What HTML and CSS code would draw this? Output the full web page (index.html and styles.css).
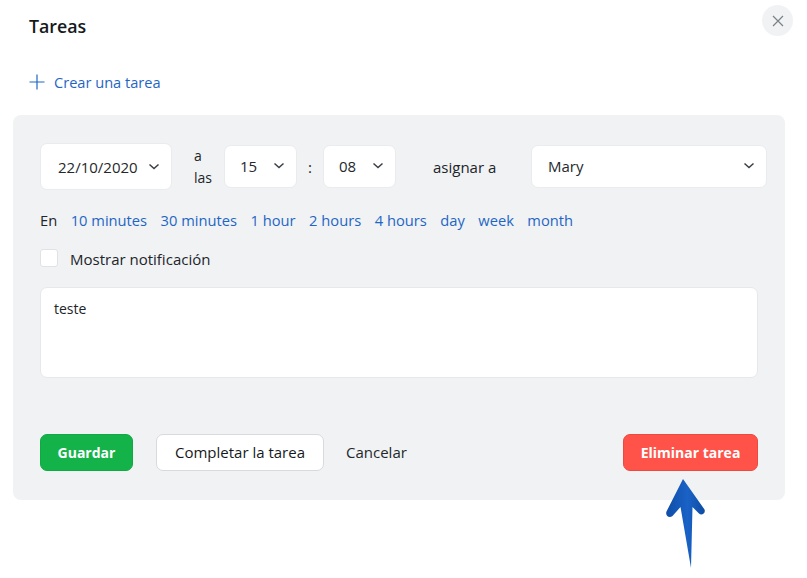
FILE: index.html
```html
<!DOCTYPE html>
<html lang="es">
<head>
<meta charset="utf-8">
<title>Tareas</title>
<link rel="stylesheet" href="styles.css">
</head>
<body>
<div class="dialog">
  <header class="head">
    <h1 class="title">Tareas</h1>
    <button class="close" aria-label="Cerrar">
      <svg width="12" height="12" viewBox="0 0 12 12"><path d="M1 1l10 10M11 1L1 11" stroke="#7b8085" stroke-width="1.2" fill="none"/></svg>
    </button>
  </header>
  <a class="create">
    <svg width="16" height="16" viewBox="0 0 16 16"><path d="M8 .5v15M.5 8h15" stroke="#1f66c4" stroke-width="1.2" fill="none"/></svg>
    <span>Crear una tarea</span>
  </a>
  <section class="panel">
    <div class="row-top">
      <div class="select date"><span>22/10/2020</span><svg class="chev" width="12" height="8" viewBox="0 0 12 8"><path d="M1.500 1.500L6 5.500l4.500-4" /></svg></div>
      <div class="at">a<br>las</div>
      <div class="select time"><span>15</span><svg class="chev" width="12" height="8" viewBox="0 0 12 8"><path d="M1.500 1.500L6 5.500l4.500-4" /></svg></div>
      <span class="colon">:</span>
      <div class="select time"><span>08</span><svg class="chev" width="12" height="8" viewBox="0 0 12 8"><path d="M1.500 1.500L6 5.500l4.500-4" /></svg></div>
      <span class="assign">asignar a</span>
      <div class="select user"><span>Mary</span><svg class="chev" width="12" height="8" viewBox="0 0 12 8"><path d="M1.500 1.500L6 5.500l4.500-4" /></svg></div>
    </div>
    <div class="quick">
      <span class="en">En</span>
      <a>10 minutes</a><a>30 minutes</a><a>1 hour</a><a>2 hours</a><a>4 hours</a><a>day</a><a>week</a><a>month</a>
    </div>
    <label class="notify"><span class="check"></span><span>Mostrar notificación</span></label>
    <div class="note">teste</div>
    <div class="actions">
      <button class="btn save">Guardar</button>
      <button class="btn complete">Completar la tarea</button>
      <button class="cancel">Cancelar</button>
      <button class="btn delete">Eliminar tarea</button>
    </div>
  </section>
  <svg class="arrow" width="42" height="91" viewBox="0 0 42 91">
    <defs>
      <linearGradient id="arrowFill" x1="0" x2="1" y1="0" y2="0">
        <stop offset="0" stop-color="#0f4da8"/>
        <stop offset="0.55" stop-color="#1a62c6"/>
        <stop offset="1" stop-color="#0e4ba3"/>
      </linearGradient>
    </defs>
    <path d="M18 1L39.500 31.500C41 35 36.500 38 34 35.500L27.500 29L26 90L15.500 29L7.500 38C4 40.500 0 37.500 1.500 33.500Z" fill="url(#arrowFill)"/>
  </svg>
</div>
</body>
</html>
```
FILE: styles.css
```css
* { box-sizing: border-box; }
html, body { margin: 0; padding: 0; background: #fff; }
body {
  font-family: "Open Sans", "Noto Sans", "Liberation Sans", sans-serif;
  font-size: 15px;
  color: #212529;
  width: 807px;
  height: 578px;
  overflow: hidden;
}
.dialog { position: relative; padding: 5px 22px 0 13px; }
.head { display: flex; justify-content: space-between; align-items: flex-start; padding-left: 16px; }
.title { margin: 9px 0 0; font-size: 17.800px; line-height: 24px; font-weight: 600; color: #16191c; }
.close {
  width: 31px; height: 31px; margin-right: -8px; border: 0; border-radius: 50%;
  background: #f1f2f4; display: flex; align-items: center; justify-content: center; padding: 0;
}
.create { display: flex; align-items: center; gap: 9px; margin: 32px 0 0 16px; height: 24px; color: #1f66c4; font-size: 14.600px; }
.panel { margin-top: 21px; height: 385px; padding: 28px 27px 0; background: #f0f2f4; border-radius: 8px; position: relative; }
.row-top { display: flex; align-items: center; margin-right: -9px; }
.select {
  background: #fff; border: 1px solid #e9ebee; border-radius: 7px; height: 43px; margin-top: -1px;
  display: flex; align-items: center; justify-content: space-between; font-size: 15px; color: #24282c;
}
.date { width: 132px; height: 47px; margin-top: 0; padding: 0 11px 0 17px; }
.time { width: 73px; padding: 0 11px 0 15px; }
.user { width: 236px; padding: 0 11px 0 16px; margin-left: auto; }
.chev { fill: none; stroke: #3a3f44; stroke-width: 1.500; }
.at { width: 52px; padding-left: 22px; line-height: 22px; font-size: 14px; }
.colon { width: 26px; text-align: center; }
.assign { margin-left: 37px; }
.quick { display: flex; gap: 13.500px; margin-top: 18px; height: 24px; align-items: center; font-size: 14.700px; }
.quick a { color: #1f66c4; }
.notify { display: flex; align-items: center; gap: 12px; margin-top: 17px; height: 20px; }
.check { width: 18px; height: 18px; margin-top: -2px; background: #fff; border: 1px solid #dfe2e6; border-radius: 3px; }
.note { margin-top: 18px; height: 91px; padding: 11px 13px; background: #fff; border: 1px solid #e6e8eb; border-radius: 7px; font-size: 14px; line-height: 20px; }
.actions { display: flex; align-items: center; margin-top: 55px; height: 38px; }
.btn { height: 37px; border-radius: 7px; font-family: inherit; font-size: 14px; padding: 0; }
.save { width: 93px; background: #14b34a; border: 1px solid #12a843; color: #fff; font-weight: 700; }
.complete { width: 168px; margin-left: 23px; background: #fff; border: 1px solid #d7dade; color: #16191c; font-size: 15px; font-weight: 500; }
.cancel { margin-left: 22px; border: 0; background: none; padding: 0; font: inherit; color: #24282c; }
.delete { width: 135px; margin-left: auto; background: #ff5349; border: 1px solid #ec4a40; color: #fff; font-weight: 700; }
.arrow { position: absolute; left: 665px; top: 478px; }
```
